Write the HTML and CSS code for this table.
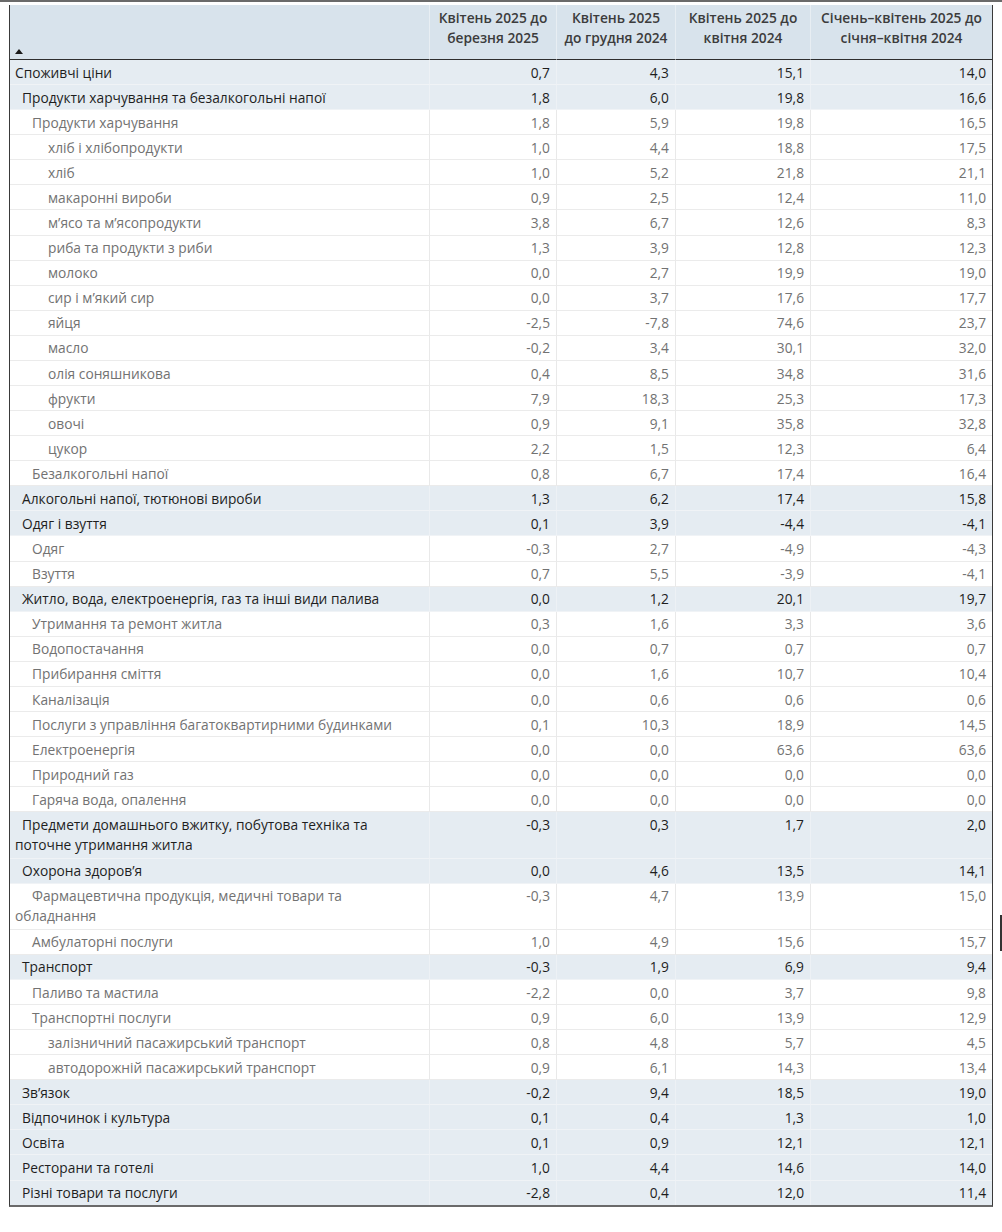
FILE: index.html
```html
<!DOCTYPE html>
<html lang="uk">
<head>
<meta charset="utf-8">
<title>Індекси споживчих цін</title>
<link rel="stylesheet" href="styles.css">
</head>
<body>
<div class="topline"></div>
<div class="frame">
<table class="grid">
<colgroup>
<col class="c1"><col class="c2"><col class="c3"><col class="c4"><col class="c5">
</colgroup>
<thead>
<tr>
<th class="hname"><span class="sort"></span></th>
<th>Квітень 2025 до<br>березня 2025</th>
<th>Квітень 2025<br>до грудня 2024</th>
<th>Квітень 2025 до<br>квітня 2024</th>
<th>Січень–квітень 2025 до<br>січня–квітня 2024</th>
</tr>
</thead>
<tbody>
<tr class="l0"><td>Споживчі ціни</td><td>0,7</td><td>4,3</td><td>15,1</td><td>14,0</td></tr>
<tr class="l1"><td>Продукти харчування та безалкогольні напої</td><td>1,8</td><td>6,0</td><td>19,8</td><td>16,6</td></tr>
<tr class="l2"><td>Продукти харчування</td><td>1,8</td><td>5,9</td><td>19,8</td><td>16,5</td></tr>
<tr class="l3"><td>хліб і хлібопродукти</td><td>1,0</td><td>4,4</td><td>18,8</td><td>17,5</td></tr>
<tr class="l3"><td>хліб</td><td>1,0</td><td>5,2</td><td>21,8</td><td>21,1</td></tr>
<tr class="l3"><td>макаронні вироби</td><td>0,9</td><td>2,5</td><td>12,4</td><td>11,0</td></tr>
<tr class="l3"><td>м’ясо та м’ясопродукти</td><td>3,8</td><td>6,7</td><td>12,6</td><td>8,3</td></tr>
<tr class="l3"><td>риба та продукти з риби</td><td>1,3</td><td>3,9</td><td>12,8</td><td>12,3</td></tr>
<tr class="l3"><td>молоко</td><td>0,0</td><td>2,7</td><td>19,9</td><td>19,0</td></tr>
<tr class="l3"><td>сир і м’який сир</td><td>0,0</td><td>3,7</td><td>17,6</td><td>17,7</td></tr>
<tr class="l3"><td>яйця</td><td>-2,5</td><td>-7,8</td><td>74,6</td><td>23,7</td></tr>
<tr class="l3"><td>масло</td><td>-0,2</td><td>3,4</td><td>30,1</td><td>32,0</td></tr>
<tr class="l3"><td>олія соняшникова</td><td>0,4</td><td>8,5</td><td>34,8</td><td>31,6</td></tr>
<tr class="l3"><td>фрукти</td><td>7,9</td><td>18,3</td><td>25,3</td><td>17,3</td></tr>
<tr class="l3"><td>овочі</td><td>0,9</td><td>9,1</td><td>35,8</td><td>32,8</td></tr>
<tr class="l3"><td>цукор</td><td>2,2</td><td>1,5</td><td>12,3</td><td>6,4</td></tr>
<tr class="l2"><td>Безалкогольні напої</td><td>0,8</td><td>6,7</td><td>17,4</td><td>16,4</td></tr>
<tr class="l1"><td>Алкогольні напої, тютюнові вироби</td><td>1,3</td><td>6,2</td><td>17,4</td><td>15,8</td></tr>
<tr class="l1"><td>Одяг і взуття</td><td>0,1</td><td>3,9</td><td>-4,4</td><td>-4,1</td></tr>
<tr class="l2"><td>Одяг</td><td>-0,3</td><td>2,7</td><td>-4,9</td><td>-4,3</td></tr>
<tr class="l2"><td>Взуття</td><td>0,7</td><td>5,5</td><td>-3,9</td><td>-4,1</td></tr>
<tr class="l1"><td>Житло, вода, електроенергія, газ та інші види палива</td><td>0,0</td><td>1,2</td><td>20,1</td><td>19,7</td></tr>
<tr class="l2"><td>Утримання та ремонт житла</td><td>0,3</td><td>1,6</td><td>3,3</td><td>3,6</td></tr>
<tr class="l2"><td>Водопостачання</td><td>0,0</td><td>0,7</td><td>0,7</td><td>0,7</td></tr>
<tr class="l2"><td>Прибирання сміття</td><td>0,0</td><td>1,6</td><td>10,7</td><td>10,4</td></tr>
<tr class="l2"><td>Каналізація</td><td>0,0</td><td>0,6</td><td>0,6</td><td>0,6</td></tr>
<tr class="l2"><td>Послуги з управління багатоквартирними будинками</td><td>0,1</td><td>10,3</td><td>18,9</td><td>14,5</td></tr>
<tr class="l2"><td>Електроенергія</td><td>0,0</td><td>0,0</td><td>63,6</td><td>63,6</td></tr>
<tr class="l2"><td>Природний газ</td><td>0,0</td><td>0,0</td><td>0,0</td><td>0,0</td></tr>
<tr class="l2"><td>Гаряча вода, опалення</td><td>0,0</td><td>0,0</td><td>0,0</td><td>0,0</td></tr>
<tr class="l1 two"><td>Предмети домашнього вжитку, побутова техніка та<br>поточне утримання житла</td><td>-0,3</td><td>0,3</td><td>1,7</td><td>2,0</td></tr>
<tr class="l1"><td>Охорона здоров’я</td><td>0,0</td><td>4,6</td><td>13,5</td><td>14,1</td></tr>
<tr class="l2 two"><td>Фармацевтична продукція, медичні товари та<br>обладнання</td><td>-0,3</td><td>4,7</td><td>13,9</td><td>15,0</td></tr>
<tr class="l2"><td>Амбулаторні послуги</td><td>1,0</td><td>4,9</td><td>15,6</td><td>15,7</td></tr>
<tr class="l1"><td>Транспорт</td><td>-0,3</td><td>1,9</td><td>6,9</td><td>9,4</td></tr>
<tr class="l2"><td>Паливо та мастила</td><td>-2,2</td><td>0,0</td><td>3,7</td><td>9,8</td></tr>
<tr class="l2"><td>Транспортні послуги</td><td>0,9</td><td>6,0</td><td>13,9</td><td>12,9</td></tr>
<tr class="l3"><td>залізничний пасажирський транспорт</td><td>0,8</td><td>4,8</td><td>5,7</td><td>4,5</td></tr>
<tr class="l3"><td>автодорожній пасажирський транспорт</td><td>0,9</td><td>6,1</td><td>14,3</td><td>13,4</td></tr>
<tr class="l1"><td>Зв’язок</td><td>-0,2</td><td>9,4</td><td>18,5</td><td>19,0</td></tr>
<tr class="l1"><td>Відпочинок і культура</td><td>0,1</td><td>0,4</td><td>1,3</td><td>1,0</td></tr>
<tr class="l1"><td>Освіта</td><td>0,1</td><td>0,9</td><td>12,1</td><td>12,1</td></tr>
<tr class="l1"><td>Ресторани та готелі</td><td>1,0</td><td>4,4</td><td>14,6</td><td>14,0</td></tr>
<tr class="l1"><td>Різні товари та послуги</td><td>-2,8</td><td>0,4</td><td>12,0</td><td>11,4</td></tr>
</tbody>
</table>
<div class="cursor"></div>
</div>
</body>
</html>
```

FILE: styles.css
```css
html, body {
  margin: 0;
  padding: 0;
  background: #ffffff;
}
body {
  font-family: "Open Sans", "Noto Sans", "DejaVu Sans", sans-serif;
  font-size: 13.75px;
  color: #1e1e1e;
}
.topline {
  height: 2px;
  background: #6a6a6a;
}
.frame {
  position: relative;
  margin: 3px 0 0 9px;
  width: 984px;
  box-sizing: border-box;
  border-left: 1px solid #3a3a3a;
  border-right: 1px solid #3a3a3a;
  border-bottom: 2px solid #6a6a6a;
}
.grid {
  width: 982px;
  table-layout: fixed;
  border-collapse: separate;
  border-spacing: 0;
}
.c1 { width: 419px; }
.c2 { width: 127px; }
.c3 { width: 119px; }
.c4 { width: 135px; }
.c5 { width: 182px; }

.grid th {
  background: #d8e3ec;
  color: #3c3c3c;
  font-weight: 600;
  line-height: 20px;
  padding: 3px 2px 11px;
  text-align: center;
  vertical-align: top;
  border-left: 1px solid #e8eef3;
  border-bottom: 1px solid #2e2e2e;
  white-space: nowrap;
}
.grid th.hname {
  border-left: 0;
  text-align: left;
  vertical-align: bottom;
  padding: 0 0 5px 5px;
  line-height: 4px;
}
.sort {
  display: inline-block;
  width: 0;
  height: 0;
  border-left: 4px solid transparent;
  border-right: 4px solid transparent;
  border-bottom: 5px solid #1a1a1a;
}

.grid td {
  line-height: 20.1px;
  padding: 2.6px 6px 1.4px 5px;
  text-align: right;
  vertical-align: top;
  border-left: 1px solid #e9e9e9;
  border-bottom: 1px solid #ebebeb;
  white-space: nowrap;
}
.grid tr.two td {
  padding-bottom: 2.4px;
}
.grid td:first-child {
  text-align: left;
  border-left: 0;
}
.grid tbody tr:last-child td {
  border-bottom: 0;
}

.l0 td, .l1 td {
  background: #e5ecf2;
  color: #1e1e1e;
}
.l0 td, .l1 td { border-bottom-color: #f0f3f6; }
.l0 td + td, .l1 td + td { border-left-color: #edf1f5; }
.l2 td, .l3 td {
  background: #ffffff;
  color: #727272;
}
.l0 td:first-child { text-indent: 0; }
.l1 td:first-child { text-indent: 7px; }
.l2 td:first-child { text-indent: 17px; }
.l3 td:first-child { text-indent: 33px; }

.cursor {
  position: absolute;
  left: 990px;
  top: 910px;
  width: 2px;
  height: 36px;
  background: #333333;
}
```
